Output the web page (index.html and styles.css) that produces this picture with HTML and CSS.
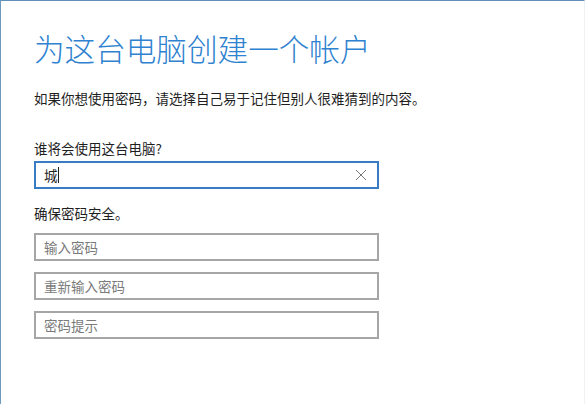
FILE: index.html
```html
<!DOCTYPE html>
<html lang="zh-CN">
<head>
    <meta charset="UTF-8">
    <title>为这台电脑创建一个帐户</title>
    <link rel="stylesheet" href="styles.css">
</head>
<body>

<div class="page">
    <h1 class="title">为这台电脑创建一个帐户</h1>
    <p class="intro">如果你想使用密码，请选择自己易于记住但别人很难猜到的内容。</p>

    <div class="label">谁将会使用这台电脑?</div>
    <div class="field focused">
        <span class="value">城</span><span class="caret"></span>
        <svg class="clear" width="12" height="12" viewBox="0 0 12 12">
            <path d="M1 1 L11 11 M11 1 L1 11" stroke="#777" stroke-width="1" fill="none"/>
        </svg>
    </div>

    <div class="label second">确保密码安全。</div>
    <div class="field"><span class="hint">输入密码</span></div>
    <div class="field"><span class="hint">重新输入密码</span></div>
    <div class="field"><span class="hint">密码提示</span></div>
</div>

</body>
</html>
```
FILE: styles.css
```css
html, body {
    margin: 0;
    height: 100%;
    background: #fff;
}
body {
    font-family: "Noto Sans CJK SC", "Microsoft YaHei", sans-serif;
    color: #1f1f1f;
}
.page {
    box-sizing: border-box;
    height: 404px;
    border-top: 1px solid #5f8fba;
    border-left: 1px solid #6f98bd;
    border-right: 1px solid #eef2f5;
    padding: 27px 0 0 33px;
    display: flex;
    flex-direction: column;
    align-items: flex-start;
}
.title {
    margin: 0;
    font-size: 30.6px;
    font-weight: 300;
    line-height: 40px;
    color: #2f82cf;
}
.intro {
    margin: 20px 0 0;
    font-size: 13.5px;
    line-height: 20px;
}
.label {
    margin-top: 30px;
    font-size: 13.5px;
    line-height: 20px;
}
.label.second {
    margin-top: 14px;
}
.field {
    box-sizing: border-box;
    width: 345px;
    height: 28px;
    margin-top: 11px;
    border: 2px solid #a6a6a6;
    padding: 0 8px;
    display: flex;
    align-items: center;
    font-size: 13.5px;
}
.label + .field {
    margin-top: 3px;
}
.label.second + .field {
    margin-top: 10px;
}
.field.focused {
    border-color: #3a7cc4;
}
.hint {
    color: #7a7a7a;
}
.caret {
    width: 1px;
    height: 16px;
    background: #222;
}
.clear {
    margin-left: auto;
    margin-right: 2px;
}
```
